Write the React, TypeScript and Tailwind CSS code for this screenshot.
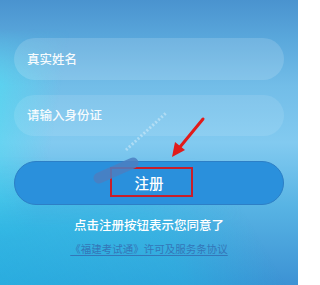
export default function App() {
  return (
    <div className="relative w-[298px] h-[285px] overflow-hidden font-['Noto_Sans_CJK_SC',sans-serif] bg-[linear-gradient(to_bottom,#4a93cf_0%,#5aa8dc_14%,#72bde8_30%,#82caf0_50%,#58b4e4_72%,#3c92d4_100%)]">
      {/* cyan strip on the left edge */}
      <div className="absolute inset-0 bg-[linear-gradient(100deg,rgba(80,220,242,0.85)_0%,rgba(80,220,242,0.5)_8%,rgba(80,220,242,0)_22%)] [mask-image:linear-gradient(to_bottom,transparent_10%,black_30%,black_70%,transparent_85%)]" />
      {/* lower diagonal bands */}
      <div className="absolute inset-0 bg-[linear-gradient(60deg,rgba(30,190,230,0.6)_0%,rgba(30,190,230,0.45)_40%,rgba(30,190,230,0)_62%)] [mask-image:linear-gradient(to_bottom,transparent_55%,black_80%)]" />

      <div className="relative flex flex-col px-[14px] pt-[38px]">
        <div className="h-[42px] rounded-full bg-white/15 flex items-center pl-[13px] text-[12.5px] font-medium text-white/95">
          真实姓名
        </div>
        <div className="mt-[15px] h-[41px] rounded-full bg-white/10 flex items-center pl-[13px] text-[12.5px] font-medium text-white/95">
          请输入身份证
        </div>
        <div className="mt-[25px] h-[44px] rounded-full bg-[#2a90dc] border border-[#2c7fc6] flex items-center justify-center text-[14.5px] font-medium text-white">
          注册
        </div>
        <p className="mt-[11px] text-center text-[12.5px] font-medium text-white leading-[18px]">
          点击注册按钮表示您同意了
        </p>
        <p className="mt-[7px] text-center text-[10.5px] leading-[16px] text-[#3476b8] underline underline-offset-2">
          《福建考试通》许可及服务条协议
        </p>
      </div>

      {/* annotation: red box around the button label */}
      <div className="absolute left-[110px] top-[167px] w-[83px] h-[30px] border-2 border-[#c81e2a]" />

      {/* annotation: arrow and watermark smudge */}
      <svg className="absolute inset-0" width="298" height="285" viewBox="0 0 298 285">
        <line x1="126" y1="150" x2="166" y2="113" stroke="rgba(255,255,255,0.35)" strokeWidth="3" strokeDasharray="2 2" />
        <line x1="99" y1="178" x2="133" y2="163" stroke="#4c7fc2" strokeWidth="11" strokeLinecap="round" opacity="0.85" />
        <line x1="203" y1="119" x2="180" y2="147" stroke="#e11b1b" strokeWidth="3" strokeLinecap="round" />
        <polygon points="172,157 175,142 185,150" fill="#e11b1b" />
      </svg>
    </div>
  );
}
